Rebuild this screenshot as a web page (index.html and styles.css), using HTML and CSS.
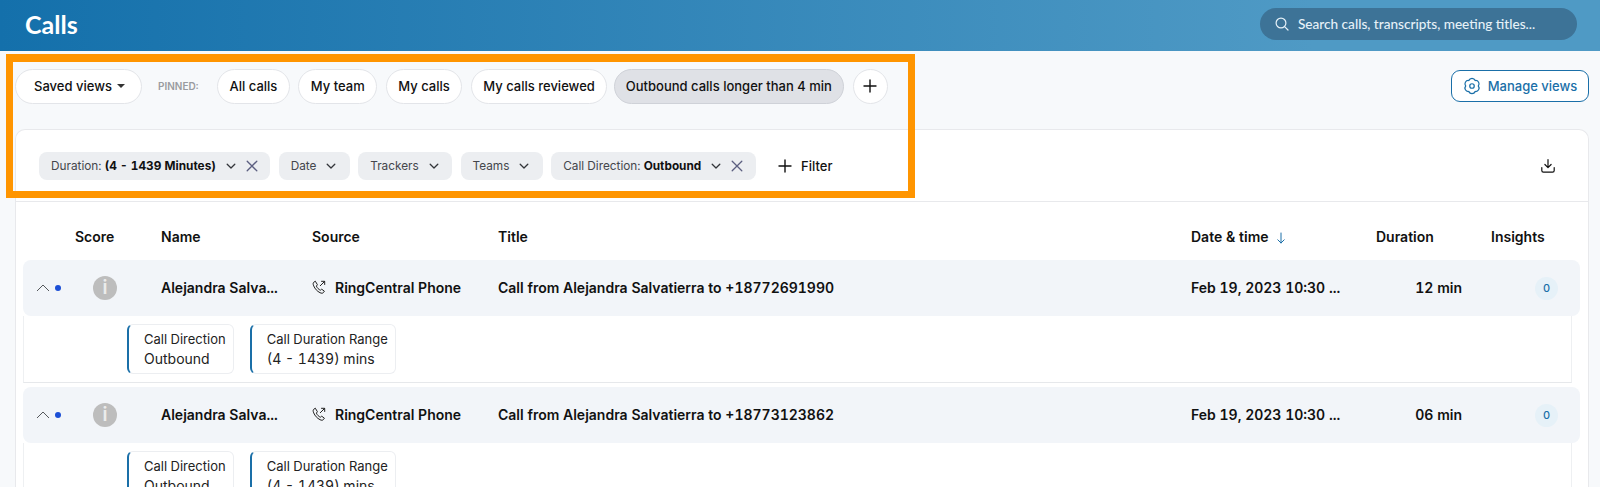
FILE: index.html
```html
<!DOCTYPE html>
<html lang="en">
<head>
<meta charset="utf-8">
<title>Calls</title>
<link rel="stylesheet" href="styles.css">
</head>
<body>
<svg class="defs" width="0" height="0" aria-hidden="true">
  <symbol id="chev" viewBox="0 0 12 12"><path d="M2.2 4.2 6 8l3.8-3.8" fill="none" stroke="currentColor" stroke-width="1.3" stroke-linecap="round" stroke-linejoin="round"/></symbol>
  <symbol id="x" viewBox="0 0 12 12"><path d="M1.2 1.2l9.6 9.6M10.8 1.2l-9.6 9.6" fill="none" stroke="currentColor" stroke-width="1.3" stroke-linecap="round"/></symbol>
  <symbol id="plus" viewBox="0 0 14 14"><path d="M7 1v12M1 7h12" fill="none" stroke="currentColor" stroke-width="1.4" stroke-linecap="round"/></symbol>
  <symbol id="phone" viewBox="0 0 14 14"><path d="M3.3 1.2 1.6 2.4C.9 3 1 4.300 1.700 5.900c1.300 3 3.400 5.300 6.300 6.800 1.500.7 2.600.7 3.300 0l1.100-1.500-2.700-2-1.300 1C6.800 9.600 5.200 8 4.400 6.100l1-1.400Z" fill="none" stroke="currentColor" stroke-width="1" stroke-linejoin="round"/><path d="M8.300 5.700 12.500 1.500M9.500 1.300h3.200v3.200" fill="none" stroke="currentColor" stroke-width="1" stroke-linecap="round" stroke-linejoin="round"/></symbol>
</svg>

<header class="topbar">
  <h1 class="page-title">Calls</h1>
  <div class="search">
    <svg class="search-icon" viewBox="0 0 14 14"><circle cx="6" cy="6" r="4.900" fill="none" stroke="currentColor" stroke-width="1.200"/><path d="m9.600 9.600 3.400 3.400" fill="none" stroke="currentColor" stroke-width="1.200" stroke-linecap="round"/></svg>
    <span>Search calls, transcripts, meeting titles...</span>
  </div>
</header>

<main class="content">
  <div class="views">
    <button class="pill saved">Saved views <span class="caret"></span></button>
    <span class="pinned">PINNED:</span>
    <button class="pill">All calls</button>
    <button class="pill">My team</button>
    <button class="pill">My calls</button>
    <button class="pill">My calls reviewed</button>
    <button class="pill active">Outbound calls longer than 4 min</button>
    <button class="pill add"><svg class="i14"><use href="#plus"/></svg></button>
    <button class="manage">
      <svg class="gear" viewBox="0 0 16 16"><path d="M5.200 3.150A3 3 0 0 1 10.800 3.150 3 3 0 0 1 13.600 8 3 3 0 0 1 10.800 12.850 3 3 0 0 1 5.200 12.850 3 3 0 0 1 2.400 8 3 3 0 0 1 5.200 3.150Z" fill="none" stroke="currentColor" stroke-width="1.100" stroke-linejoin="round"/><circle cx="8" cy="8" r="2" fill="none" stroke="currentColor" stroke-width="1.100"/></svg>
      Manage views
    </button>
  </div>

  <section class="panel">
    <div class="filters">
      <div class="chip">Duration:&nbsp;<b>(4 - 1439 Minutes)</b><svg class="i12 chip-chev"><use href="#chev"/></svg><svg class="i12 chip-x"><use href="#x"/></svg></div>
      <div class="chip">Date<svg class="i12 chip-chev"><use href="#chev"/></svg></div>
      <div class="chip">Trackers<svg class="i12 chip-chev"><use href="#chev"/></svg></div>
      <div class="chip">Teams<svg class="i12 chip-chev"><use href="#chev"/></svg></div>
      <div class="chip">Call Direction:&nbsp;<b>Outbound</b><svg class="i12 chip-chev"><use href="#chev"/></svg><svg class="i12 chip-x"><use href="#x"/></svg></div>
      <button class="add-filter"><svg class="i14"><use href="#plus"/></svg>Filter</button>
      <svg class="download" viewBox="0 0 16 16"><path d="M8 1.500v8M4.900 6.500 8 9.600l3.100-3.100" fill="none" stroke="currentColor" stroke-width="1.200" stroke-linecap="round" stroke-linejoin="round"/><path d="M1.800 9.500v3c0 1 .6 1.700 1.600 1.700h9.200c1 0 1.600-.7 1.600-1.700v-3" fill="none" stroke="currentColor" stroke-width="1.200" stroke-linecap="round"/></svg>
    </div>

    <div class="table">
      <div class="grid head">
        <span></span><span>Score</span><span>Name</span><span>Source</span><span>Title</span>
        <span>Date &amp; time <svg class="sort" viewBox="0 0 10 12"><path d="M5 1v10M1.800 7.800 5 11l3.200-3.200" fill="none" stroke="currentColor" stroke-width="1" stroke-linecap="round" stroke-linejoin="round"/></svg></span>
        <span>Duration</span><span>Insights</span>
      </div>

      <div class="grid row">
        <span class="toggle"><svg class="up" viewBox="0 0 14 8"><path d="M1 7l6-6 6 6" fill="none" stroke="currentColor" stroke-width="1"/></svg><i class="dot"></i></span>
        <span class="score">i</span>
        <span class="cell">Alejandra Salva...</span>
        <span class="cell source"><svg class="phone"><use href="#phone"/></svg>RingCentral Phone</span>
        <span class="cell">Call from Alejandra Salvatierra to +18772691990</span>
        <span class="cell">Feb 19, 2023 10:30 ...</span>
        <span class="cell dur">12 min</span>
        <span class="ins">0</span>
      </div>
      <div class="details">
        <div class="tag"><span>Call Direction</span><strong>Outbound</strong></div>
        <div class="tag"><span>Call Duration Range</span><strong>(4 - 1439) mins</strong></div>
      </div>

      <div class="grid row">
        <span class="toggle"><svg class="up" viewBox="0 0 14 8"><path d="M1 7l6-6 6 6" fill="none" stroke="currentColor" stroke-width="1"/></svg><i class="dot"></i></span>
        <span class="score">i</span>
        <span class="cell">Alejandra Salva...</span>
        <span class="cell source"><svg class="phone"><use href="#phone"/></svg>RingCentral Phone</span>
        <span class="cell">Call from Alejandra Salvatierra to +18773123862</span>
        <span class="cell">Feb 19, 2023 10:30 ...</span>
        <span class="cell dur">06 min</span>
        <span class="ins">0</span>
      </div>
      <div class="details">
        <div class="tag"><span>Call Direction</span><strong>Outbound</strong></div>
        <div class="tag"><span>Call Duration Range</span><strong>(4 - 1439) mins</strong></div>
      </div>
    </div>
  </section>
</main>

<div class="highlight"></div>
</body>
</html>
```

FILE: styles.css
```css
* { box-sizing: border-box; }
html, body { margin: 0; height: 487px; overflow: hidden; }
body { background: #f7f9fb; font-family: Inter, "Liberation Sans", sans-serif; font-variant-numeric: tabular-nums; color: #111; position: relative; }
button { font-family: inherit; font-variant-numeric: inherit; cursor: pointer; }
.defs { position: absolute; }

.topbar { height: 51px; display: flex; align-items: center; justify-content: space-between; padding: 0 23px 3px 25px; background: linear-gradient(90deg, #1470ab 0%, #4f9ac5 82%, #4f9ac5 100%); }
.page-title { margin: 0; font: 700 25px/1 Lato, sans-serif; color: #fff; }
.search { width: 317px; height: 32px; border-radius: 16px; background: #3d7397; display: flex; align-items: center; padding-left: 15px; gap: 9px; color: #e6f1f8; font: 500 13.600px Lato, sans-serif; }
.search-icon { width: 14px; height: 14px; }

.content { padding: 18px 11px 0 15px; }
.views { display: flex; align-items: center; height: 34px; }
.pill { height: 35px; border-radius: 18px; border: 1px solid #e3e5e9; background: #fff; color: #111; font-size: 13px; font-weight: 500; padding: 0 11.500px; margin-right: 8.500px; white-space: nowrap; }
.saved { width: 127px; padding: 0 0 0 2px; margin-right: 16px; display: flex; align-items: center; justify-content: center; gap: 5px; }
.caret { border: 4px solid transparent; border-top: 4px solid #333; border-bottom: 0; }
.pinned { font-size: 10px; font-weight: 600; color: #9a9ca0; width: 59px; }
.active { background: #dfe1e6; border-color: #cfd2d8; width: 230px; padding: 0; margin: 0 9px 0 -2px; }
.add { width: 35px; padding: 0; display: flex; align-items: center; justify-content: center; margin: 0; }
.i14 { width: 14px; height: 14px; }
.i12 { width: 12px; height: 12px; }
.manage { margin-left: auto; width: 138px; height: 32px; border: 1px solid #1a6fa8; border-radius: 9px; background: #fff; color: #1a6fa8; font-size: 13px; font-weight: 500; display: flex; align-items: center; justify-content: center; gap: 7px; padding: 0; }
.gear { width: 18px; height: 18px; }

.panel { margin-top: 26px; width: 1574px; background: #fff; border: 1px solid #e8e9ec; border-bottom: 0; border-radius: 10px 10px 0 0; }
.filters { height: 72px; display: flex; align-items: center; padding: 0 0 0 23px; border-bottom: 1px solid #e8e9ec; }
.chip { height: 28px; border-radius: 8px; background: #eceef1; color: #44464c; font-size: 11.800px; display: flex; align-items: center; padding: 0 12.500px 0 12px; margin-right: 8.300px; white-space: nowrap; }
.chip b { color: #111; font-weight: 700; }
.chip-chev { margin-left: 9px; color: #33353a; width: 12px; }
.chip-x { margin-left: 9px; color: #5c5f80; }
.add-filter { border: 0; background: none; display: flex; align-items: center; gap: 9px; font-size: 13px; font-weight: 500; color: #111; margin-left: 14px; padding: 0; }
.download { width: 16px; height: 16px; margin-left: auto; margin-right: 32px; color: #111; }

.table { padding: 0 8px 0 7px; }
.grid { display: grid; grid-template-columns: 52px 86px 151px 186px 693px 185px 115px 89px; align-items: center; font-size: 14px; font-weight: 600; white-space: nowrap; color: #111; }
.head { height: 58px; padding-top: 11px; }
.row { height: 56px; background: #f2f5f9; border-radius: 8px; }
.cell { padding-bottom: 2px; }
.toggle { display: flex; align-items: center; padding-left: 13px; gap: 5px; }
.up { width: 14px; height: 8px; color: #55585c; }
.dot { width: 6px; height: 6px; border-radius: 50%; background: #1c4fd6; }
.score { width: 24px; height: 24px; margin-left: 18px; border-radius: 50%; background: #bdbdbd; color: #ececec; font: 600 19px/24px Inter, sans-serif; text-align: center; }
.source { display: flex; align-items: center; gap: 9px; }
.phone { width: 14px; height: 14px; color: #222; }
.sort { width: 10px; height: 12px; color: #1a6fa8; margin-left: 4px; vertical-align: -2px; }
.dur { text-align: right; padding-right: 29px; margin-left: -40px; }
.ins { width: 23px; height: 23px; margin-left: 44px; border-radius: 50%; background: #e6f1f8; color: #1a6fa8; font-size: 11px; font-weight: 500; line-height: 23px; text-align: center; }

.details { height: 67px; margin: 0 8px 4px 0; display: flex; gap: 16px; align-items: flex-start; padding: 8px 0 0 103px; background: #fff; border-right: 1px solid #eef0f2; border-left: 1px solid #eef0f2; border-bottom: 1px solid #e6e8eb; }
.tag { height: 50px; padding: 6px 7px 0 15px; border: 1px solid #eceef1; border-left: 2px solid #1a6fa8; border-radius: 6px; display: flex; flex-direction: column; gap: 3px; font-size: 13px; color: #222; white-space: nowrap; }
.tag strong { font-size: 14px; font-weight: 400; }

.highlight { position: absolute; left: 6px; top: 54px; width: 909px; height: 144px; border: 8px solid #ff9500; border-width: 8px 7px 7px 7px; pointer-events: none; }
```
